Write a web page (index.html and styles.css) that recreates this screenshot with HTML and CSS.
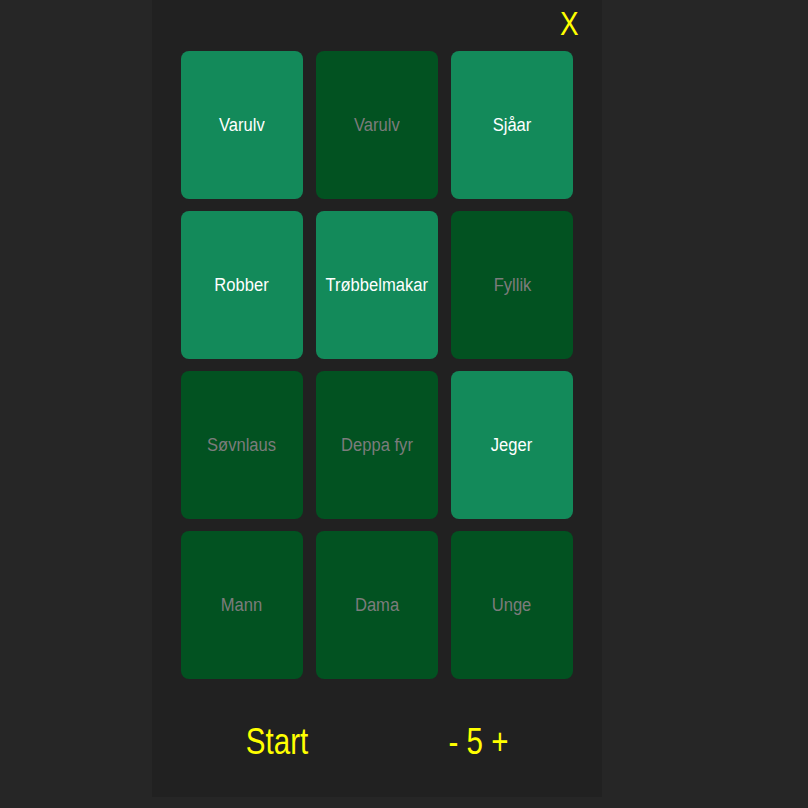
FILE: index.html
```html
<!DOCTYPE html>
<html>
<head>
<meta charset="utf-8">
<link rel="stylesheet" href="styles.css">
</head>
<body>
<div class="app">
  <div class="topbar"><span class="close">X</span></div>
  <div class="grid">
    <div class="card on"><span class="label">Varulv</span></div>
    <div class="card"><span class="label">Varulv</span></div>
    <div class="card on"><span class="label">Sjåar</span></div>
    <div class="card on"><span class="label">Robber</span></div>
    <div class="card on"><span class="label">Trøbbelmakar</span></div>
    <div class="card"><span class="label">Fyllik</span></div>
    <div class="card"><span class="label">Søvnlaus</span></div>
    <div class="card"><span class="label">Deppa fyr</span></div>
    <div class="card on"><span class="label">Jeger</span></div>
    <div class="card"><span class="label">Mann</span></div>
    <div class="card"><span class="label">Dama</span></div>
    <div class="card"><span class="label">Unge</span></div>
  </div>
  <div class="footer">
    <div class="half"><span class="big">Start</span></div>
    <div class="half"><span class="big">- 5 +</span></div>
  </div>
</div>
</body>
</html>
```
FILE: styles.css
```css
html, body {
  margin: 0;
  padding: 0;
  background: #262626;
}
body {
  font-family: "Liberation Sans", Arial, sans-serif;
}
.app {
  margin-left: 152px;
  width: 450px;
  height: 797px;
  background: #212121;
  display: flex;
  flex-direction: column;
}
.topbar {
  height: 51px;
  display: flex;
  justify-content: flex-end;
  align-items: flex-start;
  padding-right: 23px;
  box-sizing: border-box;
}
.close {
  display: inline-block;
  color: #ffff00;
  font-size: 34px;
  line-height: 1;
  margin-top: 6px;
  transform: scaleX(0.82);
  transform-origin: right center;
}
.grid {
  display: grid;
  grid-template-columns: repeat(3, 122px);
  grid-auto-rows: 148px;
  column-gap: 13px;
  row-gap: 12px;
  padding: 0 29px;
}
.card {
  background: #025221;
  color: #7c7c7c;
  border-radius: 8px;
  display: flex;
  align-items: center;
  justify-content: center;
  font-size: 18px;
}
.card.on {
  background: #138a5a;
  color: #ffffff;
}
.label {
  display: inline-block;
  white-space: nowrap;
  transform: scaleX(0.92);
  margin-top: 1px;
}
.footer {
  display: flex;
  padding: 0 22px 0 24px;
  margin-top: 42px;
}
.half {
  flex: 1;
  display: flex;
  justify-content: center;
}
.big {
  display: inline-block;
  color: #ffff00;
  font-size: 36px;
  line-height: 42px;
  white-space: nowrap;
  transform: scaleX(0.82);
}
```
